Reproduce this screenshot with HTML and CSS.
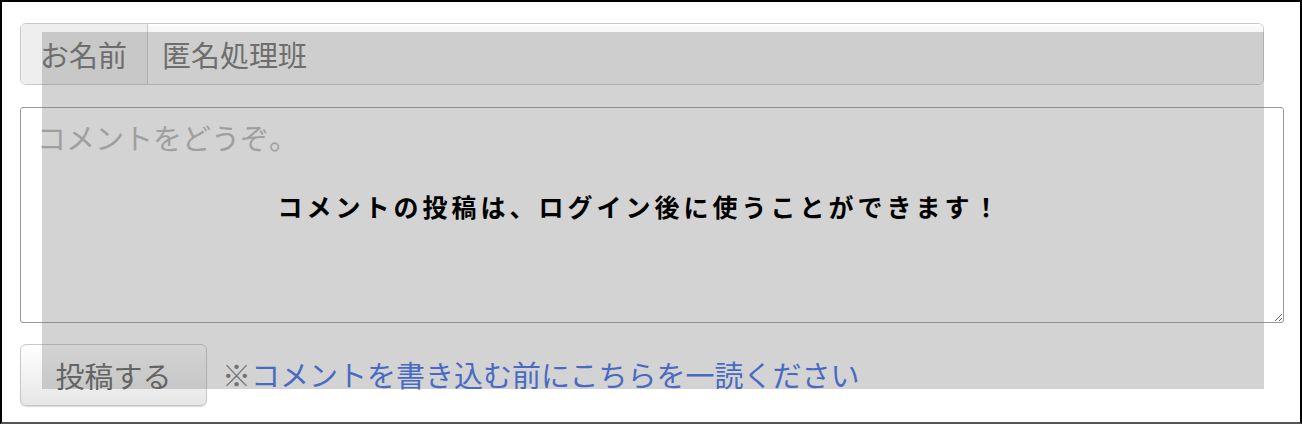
FILE: index.html
```html
<!DOCTYPE html>
<html lang="ja">
<head>
<meta charset="utf-8">
<title>コメント</title>
<link rel="stylesheet" href="styles.css">
</head>
<body>
<div class="frame">
  <form class="comment-form">
    <div class="name-group">
      <span class="name-label">お名前</span>
      <span class="name-input">匿名処理班</span>
    </div>
    <textarea class="comment-box" placeholder="コメントをどうぞ。"></textarea>
    <div class="submit-row">
      <button type="button" class="submit-btn">投稿する</button>
      <span class="note"><span class="note-mark">※</span><a class="note-link" href="#">コメントを書き込む前にこちらを一読ください</a></span>
    </div>
  </form>
  <div class="login-overlay">
    <p class="login-msg">コメントの投稿は、ログイン後に使うことができます！</p>
  </div>
</div>
</body>
</html>
```

FILE: styles.css
```css
html, body {
  margin: 0;
  padding: 0;
  background: #fff;
}
.frame {
  position: relative;
  width: 1302px;
  height: 424px;
  box-sizing: border-box;
  border: 2px solid #000;
  border-bottom: 2px solid #555;
  padding: 21px 0 0 18px;
  font-family: "Noto Sans CJK JP", "Noto Sans", sans-serif;
  font-size: 29px;
}
.comment-form {
  display: flex;
  flex-direction: column;
  align-items: flex-start;
}
.name-group {
  display: flex;
  width: 1244px;
  height: 62px;
  box-sizing: border-box;
  border: 1px solid #c8c8c8;
  border-radius: 6px;
  overflow: hidden;
}
.name-label {
  width: 127px;
  box-sizing: border-box;
  padding-left: 19px;
  background: #eee;
  border-right: 1px solid #c8c8c8;
  color: #646464;
  display: flex;
  align-items: center;
  line-height: 1;
}
.name-input {
  flex: 1;
  padding-left: 14px;
  background: #f8f8f8;
  box-shadow: inset 0 2px 0 #fff;
  color: #646464;
  display: flex;
  align-items: center;
  line-height: 1;
}
.comment-box {
  margin-top: 22px;
  width: 1264px;
  height: 216px;
  box-sizing: border-box;
  border: 1px solid #999;
  border-radius: 3px;
  padding: 9px 16px;
  font-family: inherit;
  font-size: 29px;
  line-height: 1.4;
  color: #333;
  background: #fff;
  resize: both;
  outline: none;
}
.comment-box::placeholder {
  color: #b0b0b0;
  opacity: 1;
}
.submit-row {
  margin-top: 21px;
  display: flex;
  align-items: center;
  gap: 15px;
}
.submit-btn {
  width: 187px;
  height: 62px;
  box-sizing: border-box;
  border: 1px solid #c8c8c8;
  border-radius: 6px;
  background: linear-gradient(#fff, #e6e6e6);
  box-shadow: 0 1px 1px rgba(0,0,0,0.15);
  font-family: inherit;
  font-size: 29px;
  color: #555;
  padding: 0;
  line-height: 1;
}
.note {
  line-height: 1;
  padding-bottom: 2px;
}
.note-mark {
  color: #6a6a6a;
}
.note-link {
  color: #2a5ee8;
  text-decoration: none;
}
.login-overlay {
  position: absolute;
  left: 40px;
  top: 30px;
  width: 1222px;
  height: 357px;
  background: rgba(128,128,128,0.35);
  display: flex;
  align-items: center;
  justify-content: center;
  padding-right: 26px;
  box-sizing: border-box;
}
.login-msg {
  margin: 0 0 8px 0;
  font-size: 25px;
  font-weight: bold;
  letter-spacing: 4px;
  color: #000;
  line-height: 1;
}
```
